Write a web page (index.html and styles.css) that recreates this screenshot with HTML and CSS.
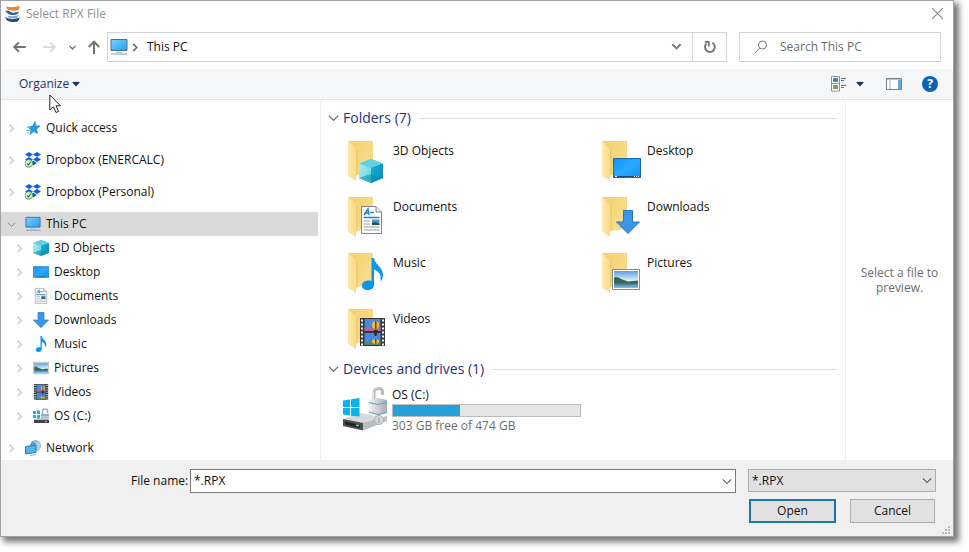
FILE: index.html
```html
<!DOCTYPE html>
<html lang="en">
<head>
<meta charset="utf-8">
<title>Select RPX File</title>
<meta name="viewport" content="width=device-width, initial-scale=1">
<link rel="stylesheet" href="styles.css">
</head>
<body>
<svg class="defs" aria-hidden="true">
  <defs>
    <linearGradient id="g-back" x1="0" y1="0" x2="1" y2="1"><stop offset="0" stop-color="#f3d070"/><stop offset="1" stop-color="#fbdf92"/></linearGradient>
    <linearGradient id="g-flap" x1="0" y1="0" x2="1" y2="0"><stop offset="0" stop-color="#ffe9a8"/><stop offset="1" stop-color="#f8dc8a"/></linearGradient>
    <linearGradient id="g-screen" x1="0" y1="0" x2="1" y2="1"><stop offset="0" stop-color="#7fd0ff"/><stop offset="1" stop-color="#1e9ff2"/></linearGradient>
    <linearGradient id="g-desk" x1="0" y1="0" x2="1" y2="1"><stop offset="0" stop-color="#0d94f5"/><stop offset=".5" stop-color="#2ba9ff"/><stop offset="1" stop-color="#0c93f3"/></linearGradient>
    <linearGradient id="g-left" x1="0" y1="0" x2="1" y2="1"><stop offset="0" stop-color="#b5eff5"/><stop offset="1" stop-color="#58cfdd"/></linearGradient>
    <linearGradient id="g-right" x1="0" y1="0" x2="1" y2="1"><stop offset="0" stop-color="#18b4da"/><stop offset="1" stop-color="#0685b5"/></linearGradient>
    <linearGradient id="g-sky" x1="0" y1="0" x2="0" y2="1"><stop offset="0" stop-color="#5b9fe0"/><stop offset=".6" stop-color="#e8f5fc"/></linearGradient>
    <linearGradient id="g-sea" x1="0" y1="0" x2="0" y2="1"><stop offset="0" stop-color="#2e6c96"/><stop offset="1" stop-color="#8fc0da"/></linearGradient>
    <linearGradient id="g-metal" x1="0" y1="0" x2="1" y2="0"><stop offset="0" stop-color="#f0f2f4"/><stop offset="1" stop-color="#a9adb2"/></linearGradient>
  </defs>
  <symbol id="folder" viewBox="0 0 40 44">
    <path d="M0 0H25V32L8 34Z" fill="url(#g-back)"/>
    <path d="M0 0L8 8V40L0 35Z" fill="url(#g-flap)"/>
    <path d="M8 8V36L10 33V10Z" fill="#ecc45f" opacity=".5"/>
  </symbol>
  <symbol id="pc" viewBox="0 0 18 16">
    <path d="M1 .5H17V11.500H1Z" fill="url(#g-screen)" stroke="#45708e"/>
    <path d="M6 13.500H12" stroke="#a9c9dd"/><path d="M1 15H17" stroke="#7d9db3"/>
  </symbol>
  <symbol id="cube" viewBox="0 0 24 24">
    <path d="M12 0L24 4.500V19L12 24L0 19V4.500Z" fill="#4cc8dc"/>
    <path d="M12 0L24 4.500L12 9L0 4.500Z" fill="#62d0e2"/>
    <path d="M0 4.500L12 9V24L0 19Z" fill="url(#g-left)"/>
    <path d="M12 9L24 4.500V19L12 24Z" fill="url(#g-right)"/>
    <path d="M0 19L12 15L24 19L12 24Z" fill="#0a8fa8" opacity=".6"/>
  </symbol>
  <symbol id="desktop" viewBox="0 0 28 20">
    <path d="M.5 .5H27.500V19.500H.5Z" fill="url(#g-desk)" stroke="#1766a8"/>
    <path d="M1 18.500H27" stroke="#084f8c"/><path d="M2 18.500H4M21 18.500H22M23 18.500H24M25 18.500H26" stroke="#fff"/>
  </symbol>
  <symbol id="doc" viewBox="0 0 21 28">
    <path d="M.5 .5H15L20.500 6V27.500H.5Z" fill="#fff" stroke="#848484"/>
    <path d="M15 .5V6H20.500" fill="#e9e9e9" stroke="#848484"/>
    <path d="M3 9L7 3L8 9M4.500 7H8M9 6.500H13M2.500 11.500H18.500" fill="none" stroke="#2583c5" stroke-width="1.500"/>
    <path d="M2.500 15H9M2.500 18H9M2.500 21H18.500M2.500 24H18.500" stroke="#999"/>
    <path d="M11 13.500H18.500V19H11Z" fill="#4a95ca"/><path d="M11 17Q14 15 18.500 18V19H11Z" fill="#274d55"/>
  </symbol>
  <symbol id="down" viewBox="0 0 24 24">
    <path d="M7.500 .5H16.500V12H23.500L12 23.500L.5 12H7.500Z" fill="#3c96e4" stroke="#2678c0"/>
  </symbol>
  <symbol id="note" viewBox="0 0 21 32">
    <path d="M9.500 0H12C12.500 6 21 9 21 17Q21 21 18.500 23.500Q20 14 12 11.500V27C12 30 9 32 5.500 32C2 32 0 30 0 27.500C0 24 4.500 21.500 9.500 23Z" fill="#0897ee"/>
  </symbol>
  <symbol id="picture" viewBox="0 0 28 21">
    <path d="M.5 .5H27.500V20.500H.5Z" fill="#fff" stroke="#858b90"/>
    <path d="M2 2H26V19H2Z" fill="url(#g-sky)"/>
    <path d="M2 8.500Q5 7 9 10L16 12.500L26 11.500V14.500H2Z" fill="#3c6654"/><path d="M2 14H26V19H2Z" fill="url(#g-sea)"/>
  </symbol>
  <symbol id="film" viewBox="0 0 25 28">
    <path d="M0 0H25V28H0Z" fill="#343434"/>
    <path d="M2 1.500V28M23 1.500V28" stroke="#fff" stroke-width="2" stroke-dasharray="2 2"/>
    <path d="M4.500 1H20.500V13H4.500ZM4.500 15H20.500V27H4.500Z" fill="#4b86de"/>
    <path d="M4.500 10Q8 8 12 11L20.500 9V13H4.500Z" fill="#c06090"/><path d="M4.500 24L12 25L20.500 23V27H4.500Z" fill="#538b4d"/>
    <ellipse cx="15.500" cy="7" rx="3.500" ry="4" fill="#eebf27"/><path d="M15 3H16.500V11H15Z" fill="#7c2a2a"/><path d="M14 12H17.500L16.500 18H14.500Z" fill="#282828"/>
    <ellipse cx="15.500" cy="23.500" rx="3.500" ry="2.500" fill="#eebf27"/><path d="M15 21H16.500V26H15Z" fill="#a22e2a"/>
  </symbol>
  <symbol id="star" viewBox="0 0 16 16">
    <path d="M10 1.500L10.700 5.800L15 6L11.500 9L12.500 13.500L8.800 11.500L5 14.500L6 10L3 7L7.500 6.200Z" fill="#259be8" stroke="#147fc5" stroke-width=".6"/>
    <path d="M2 7.500H5M1 10.500H5M2 13H4" stroke="#65b9ec"/>
  </symbol>
  <symbol id="dropbox" viewBox="0 0 16 16">
    <path d="M4 0L8 2.500L4 5L0 2.500ZM12 0L16 2.500L12 5L8 2.500ZM4 5L8 7.500L4 10L0 7.500ZM12 5L16 7.500L12 10L8 7.500ZM8 8.500L12 11L8 13.500L5 11Z" fill="#0f5ee8"/>
    <circle cx="3.800" cy="11.500" r="3.800" fill="#f4fff4" stroke="#4b9f56"/><path d="M1.800 11.500L3.300 13L6 9.800" fill="none" stroke="#318a3e" stroke-width="1.200"/>
  </symbol>
  <symbol id="drive-s" viewBox="0 0 16 16">
    <path d="M0 3H3V6H0ZM4 2.500H7V6H4ZM0 7H3V10H0ZM4 7H7V10.500H4Z" fill="#16b3df"/>
    <path d="M9.500 7V3Q9.500 1 12 1T14.500 3V5" fill="none" stroke="#a3abb0" stroke-width="1.500"/><path d="M8 6H16V11H8Z" fill="#bac5cb"/><path d="M8 7H16" stroke="#7098a8"/>
    <path d="M2 10.500H14L16 12H1Z" fill="#b8bcbe"/><path d="M1 12H16V15H1Z" fill="#3e4446"/><path d="M12 13.500H14" stroke="#5ed36c"/>
  </symbol>
  <symbol id="network" viewBox="0 0 16 16">
    <circle cx="10.500" cy="5.500" r="5.300" fill="#5b9dc0"/><path d="M8 1Q12 3 10 6T14 10Q17 6 14 2Z" fill="#a8d3df"/>
    <path d="M.5 6.500L11 5V12.500L.5 14Z" fill="#4fb4f2" stroke="#347ca9"/><path d="M5 15.500L11 14.500" stroke="#8faebd"/>
  </symbol>
  <symbol id="drive" viewBox="0 0 44 44">
    <path d="M0 32L17 26L44 31L20 43L0 39Z" fill="#d6d8da"/><path d="M0 32L20 36V43.500L0 39Z" fill="#4b4f50"/><path d="M2 34.500L17 38V41L2 37.500Z" fill="#222"/><path d="M13 38L16 38.700" stroke="#4be26a" stroke-width="1.500"/>
    <path d="M20 36L44 29V34L20 43.500Z" fill="#b9bcc0"/>
    <path d="M0 13.500L7 12.500V20H0ZM8 12.300L16.500 11V20H8ZM0 21H7V28.500L0 27.500ZM8 21H16.500V29.500L8 28.700Z" fill="#08b5ea"/>
    <path d="M31 13V6Q31 1.500 35.500 1.500T39.500 6V8" fill="none" stroke="#b6babe" stroke-width="3"/><path d="M30.500 12V6Q31 1 35.500 1" fill="none" stroke="#e3e6e8"/>
    <path d="M26 13L35 11L44 13V26L35 29L26 26Z" fill="url(#g-metal)"/><path d="M26 15.500L35 17.500L44 15.500M26 25L35 27.500L44 25" fill="none" stroke="#65a6c0"/>
    <circle cx="36" cy="33" r="4.500" fill="#d4d8db" stroke="#adb2b6"/><path d="M36 31V36" stroke="#8d9296"/>
  </symbol>
  <symbol id="right" viewBox="0 0 8 10"><path d="M2 1L6 5L2 9" fill="none" stroke="currentColor" stroke-width="1.700"/></symbol>
  <symbol id="chev" viewBox="0 0 12 8"><path d="M1 1.500L6 6.500L11 1.500" fill="none" stroke="currentColor" stroke-width="1.300"/></symbol>
  <symbol id="caret" viewBox="0 0 8 5"><path d="M0 0H8L4 4.500Z" fill="currentColor"/></symbol>
</svg>

<main class="dialog">
  <header class="titlebar">
    <svg class="logo" viewBox="0 0 16 16" aria-hidden="true"><path d="M1 .5Q7 2 15 0L13.500 4Q7 5.500 2.500 3.500Z" fill="#ef8127"/><path d="M0 4.500Q4 4.500 7 6.500Q10 7 14.500 5.500Q12 9.500 7.500 9Q3 9 0 4.500Z" fill="#2d609c"/><path d="M2.500 9.500Q8 11 13.500 9L12 12Q7 12.500 3.500 11.500Z" fill="#7fa9cc"/><path d="M0 11Q7 14.500 15 11.500L13 15.500Q6 17 2 14.500Z" fill="#254e87"/></svg>
    <h1>Select RPX File</h1>
    <button class="plain close" aria-label="Close"><svg viewBox="0 0 10 10"><path d="M0 0L10 10M10 0L0 10" stroke="#8a8a8a"/></svg></button>
  </header>

  <nav class="navbar" aria-label="Location">
    <div class="arrows">
      <button class="plain" aria-label="Back"><svg class="arrow" viewBox="0 0 12 12"><path d="M11 6H1M5 2L1 6L5 10" fill="none" stroke="#737373" stroke-width="1.700"/></svg></button>
      <button class="plain" aria-label="Forward"><svg class="arrow" viewBox="0 0 12 12"><path d="M1 6H11M7 2L11 6L7 10" fill="none" stroke="#d8d8d8" stroke-width="1.500"/></svg></button>
      <button class="plain recent" aria-label="Recent locations"><svg viewBox="0 0 12 8"><path d="M1 1.500L6 6.500L11 1.500" fill="none" stroke="#777" stroke-width="2.500"/></svg></button>
      <button class="plain" aria-label="Up"><svg class="arrow" viewBox="0 0 12 12"><path d="M6 12V1.500M1.500 6L6 1.500L10.500 6" fill="none" stroke="#737373" stroke-width="1.700"/></svg></button>
    </div>
    <div class="address">
      <svg class="pc"><use href="#pc"/></svg>
      <svg class="crumb"><use href="#right"/></svg>
      <a href="#this-pc">This PC</a>
      <button class="plain drop" aria-label="Previous locations"><svg viewBox="0 0 12 8"><path d="M1.500 1L6 5.500L10.500 1" fill="none" stroke="#777" stroke-width="2.200"/></svg></button>
      <button class="plain refresh" aria-label="Refresh"><svg viewBox="0 0 12 12"><path d="M3 3A4.200 4.200 0 1 0 8 2.400" fill="none" stroke="#737373" stroke-width="1.600"/><path d="M1.500 1.500H5V5.500" fill="none" stroke="#737373" stroke-width="1.500"/></svg></button>
    </div>
    <label class="search">
      <svg viewBox="0 0 14 14" aria-hidden="true"><circle cx="8.500" cy="5" r="4" fill="none" stroke="#777"/><path d="M5.700 8L1 13" stroke="#777"/></svg>
      <input type="search" placeholder="Search This PC" aria-label="Search This PC">
    </label>
  </nav>

  <div class="toolbar">
    <div class="organize"><button class="plain">Organize <svg class="caret"><use href="#caret"/></svg></button>
      <svg class="pointer" viewBox="0 0 13 20" aria-hidden="true"><path d="M.8 1V16L4.300 12.700L7 18.500L9.500 17.400L7 11.800H11.500Z" fill="#fff" stroke="#222"/></svg>
    </div>
    <div class="tools">
      <button class="plain view" aria-label="Change view">
        <svg class="views" viewBox="0 0 16 16"><path d="M.5 .5H8.500V7.500H.5ZM.5 7.500H8.500V15H.5Z" fill="#fff" stroke="#87919a"/><path d="M2 2H7V6H2Z" fill="#4b89b4"/><path d="M2 9H7V13H2Z" fill="#8c9b55"/><path d="M10 2.500H15M10 4.500H13M10 9.500H15M10 11.500H13" stroke="#62707e"/></svg>
        <svg class="caret"><use href="#caret"/></svg>
      </button>
      <button class="plain" aria-label="Preview pane"><svg class="pane" viewBox="0 0 16 12"><path d="M.5 .5H15.500V11.500H.5Z" fill="#fff" stroke="#77828c"/><path d="M.5 1H15.500" stroke="#77828c"/><path d="M4 2V11" stroke="#aaa"/><path d="M12 2H15V11H12Z" fill="#66aad2"/></svg></button>
      <button class="help" aria-label="Help">?</button>
    </div>
  </div>

  <div class="content">
    <nav class="tree" aria-label="Folders">
      <ul>
        <li><a href="#quick"><svg class="exp"><use href="#right"/></svg><svg class="ico"><use href="#star"/></svg>Quick access</a></li>
        <li><a href="#enercalc"><svg class="exp"><use href="#right"/></svg><svg class="ico"><use href="#dropbox"/></svg>Dropbox (ENERCALC)</a></li>
        <li><a href="#personal"><svg class="exp"><use href="#right"/></svg><svg class="ico"><use href="#dropbox"/></svg>Dropbox (Personal)</a></li>
        <li><a class="selected" id="this-pc" href="#this-pc"><svg class="exp open"><use href="#chev"/></svg><svg class="ico"><use href="#pc"/></svg>This PC</a>
          <ul>
            <li><a href="#f1"><svg class="exp"><use href="#right"/></svg><svg class="ico"><use href="#cube"/></svg>3D Objects</a></li>
            <li><a href="#f2"><svg class="exp"><use href="#right"/></svg><svg class="ico"><use href="#desktop"/></svg>Desktop</a></li>
            <li><a href="#f3"><svg class="exp"><use href="#right"/></svg><svg class="ico"><use href="#doc"/></svg>Documents</a></li>
            <li><a href="#f4"><svg class="exp"><use href="#right"/></svg><svg class="ico"><use href="#down"/></svg>Downloads</a></li>
            <li><a href="#f5"><svg class="exp"><use href="#right"/></svg><svg class="ico"><use href="#note"/></svg>Music</a></li>
            <li><a href="#f6"><svg class="exp"><use href="#right"/></svg><svg class="ico"><use href="#picture"/></svg>Pictures</a></li>
            <li><a href="#f7"><svg class="exp"><use href="#right"/></svg><svg class="ico"><use href="#film"/></svg>Videos</a></li>
            <li><a href="#c"><svg class="exp"><use href="#right"/></svg><svg class="ico"><use href="#drive-s"/></svg>OS (C:)</a></li>
          </ul>
        </li>
        <li><a href="#network"><svg class="exp"><use href="#right"/></svg><svg class="ico"><use href="#network"/></svg>Network</a></li>
      </ul>
    </nav>

    <div class="items">
      <section>
        <h2><svg><use href="#chev"/></svg>Folders (7)</h2>
        <div class="tiles">
          <a id="f1" href="#f1"><svg class="big" viewBox="0 0 40 44"><use href="#folder" width="40" height="44"/><use href="#cube" x="11" y="18" width="24" height="24"/></svg>3D Objects</a>
          <a id="f2" href="#f2"><svg class="big" viewBox="0 0 40 44"><use href="#folder" width="40" height="44"/><use href="#desktop" x="11" y="17" width="28" height="20"/></svg>Desktop</a>
          <a id="f3" href="#f3"><svg class="big" viewBox="0 0 40 44"><use href="#folder" width="40" height="44"/><use href="#doc" x="13" y="9" width="21" height="28"/></svg>Documents</a>
          <a id="f4" href="#f4"><svg class="big" viewBox="0 0 40 44"><use href="#folder" width="40" height="44"/><use href="#down" x="14" y="13" width="24" height="24"/></svg>Downloads</a>
          <a id="f5" href="#f5"><svg class="big" viewBox="0 0 40 44"><use href="#folder" width="40" height="44"/><use href="#note" x="14" y="5" width="21" height="32"/></svg>Music</a>
          <a id="f6" href="#f6"><svg class="big" viewBox="0 0 40 44"><use href="#folder" width="40" height="44"/><use href="#picture" x="10" y="16" width="28" height="21"/></svg>Pictures</a>
          <a id="f7" href="#f7"><svg class="big" viewBox="0 0 40 44"><use href="#folder" width="40" height="44"/><use href="#film" x="12" y="9" width="25" height="28"/></svg>Videos</a>
        </div>
      </section>
      <section>
        <h2><svg><use href="#chev"/></svg>Devices and drives (1)</h2>
        <a class="drive" id="c" href="#c">
          <svg><use href="#drive"/></svg>
          <span class="usage"><span>OS (C:)</span><span class="bar"><span class="used" style="width:36%"></span></span><span class="free">303 GB free of 474 GB</span></span>
        </a>
      </section>
    </div>

    <aside class="preview">Select a file to preview.</aside>
  </div>

  <footer class="footer">
    <label for="file">File name:</label>
    <div class="combo"><input id="file" type="text" value="*.RPX"><button class="plain" aria-label="Show recent files"><svg class="chev"><use href="#chev"/></svg></button></div>
    <div class="choices">
      <div class="filter"><select aria-label="File type"><option>*.RPX</option></select><svg class="chev"><use href="#chev"/></svg></div>
      <div class="actions"><button class="button primary">Open</button><button class="button">Cancel</button></div>
    </div>
    <svg class="grip" viewBox="0 0 8 8" aria-hidden="true"><path d="M6 0H8V2H6ZM3 3H5V5H3ZM6 3H8V5H6ZM0 6H2V8H0ZM3 6H5V8H3ZM6 6H8V8H6Z" fill="#bbb"/></svg>
  </footer>
</main>
</body>
</html>
```
FILE: styles.css
```css
* { box-sizing: border-box; }
body { margin: 0; min-height: 100vh; display: flex; background: #fff; color: #111; font: 12px/16px "Open Sans", "Noto Sans", sans-serif; }
a { color: inherit; text-decoration: none; }
svg { display: block; flex: none; }
button, input, select { font: inherit; color: inherit; }
.defs { position: absolute; width: 0; height: 0; }
.plain { border: 0; padding: 0; background: none; display: flex; align-items: center; justify-content: center; }
h1, h2 { margin: 0; font-weight: 400; }

.dialog { flex: 1; min-width: 0; margin: 0 15px 15px 0; display: flex; flex-direction: column; background: #fff; border: 1px solid #a2a2a2; box-shadow: 4px 4px 6px 1px #777; }

.titlebar { display: flex; align-items: center; gap: 5px; height: 25px; padding: 0 10px 0 4px; }
.titlebar h1 { flex: 1; font-size: 12px; color: #8f8f8f; }
.logo { width: 16px; height: 16px; }
.close svg { width: 11px; height: 11px; }

.navbar { display: flex; gap: 12px; padding: 6px 12px 7px 12px; }
.arrows { display: flex; align-items: center; gap: 15px; width: 94px; margin-right: -12px; }
.arrow { width: 14px; height: 14px; }
.recent { margin: 0 -4px 0 -2px; }
.recent svg { width: 7px; height: 5px; }
.address { flex: 1; display: flex; align-items: stretch; height: 30px; border: 1px solid #d4d4d4; }
.address > svg, .address > a { align-self: center; }
.address a { flex: 1; }
.pc { width: 18px; height: 16px; margin-left: 2px; }
.crumb { width: 8px; height: 9px; margin: 0 8px 0 3px; color: #666; }
.drop { width: 31px; }
.drop svg { width: 11px; height: 8px; }
.refresh { width: 34px; border-left: 1px solid #d4d4d4; }
.refresh svg { width: 14px; height: 14px; }
.search { width: 202px; height: 30px; display: flex; align-items: center; gap: 12px; padding: 0 14px; border: 1px solid #d4d4d4; }
.search svg { width: 14px; height: 14px; }
.search input { flex: 1; min-width: 0; padding: 0; border: 0; background: none; }
.search input::placeholder { color: #6d6d6d; opacity: 1; }

.toolbar { display: flex; justify-content: space-between; align-items: center; height: 31px; padding: 0 15px 0 18px; background: #f4f6f8; border-bottom: 1px solid #e3e6e9; color: #1d3168; }
.organize { position: relative; }
.organize button { gap: 3px; }
.pointer { position: absolute; left: 30px; top: 18px; width: 13px; height: 20px; z-index: 1; }
.caret { width: 8px; height: 5px; }
.tools { display: flex; align-items: center; gap: 20px; }
.view { gap: 9px; margin-right: 2px; }
.views { width: 16px; height: 16px; }
.pane { width: 16px; height: 12px; }
.help { width: 16px; height: 16px; padding: 0; border: 0; border-radius: 50%; background: #0864ba; color: #fff; font-weight: 700; line-height: 16px; }

.content { flex: 1; display: flex; }
.tree { width: 320px; padding: 16px 2px 0 0; border-right: 1px solid #f0f0f0; }
.tree ul { list-style: none; margin: 0; padding: 0; }
.tree > ul { display: grid; gap: 8px; }
.tree a { display: flex; align-items: center; height: 24px; padding-left: 6px; }
.tree li li a { padding-left: 14px; }
.tree .selected { background: #d9d9d9; }
.exp { width: 9px; height: 9px; margin-right: 9px; color: #d0d0d0; }
.exp.open { height: 7px; color: #8a8a8a; }
.ico { width: 16px; height: 16px; margin-right: 5px; }

.items { flex: 1; padding: 8px 8px 0 7px; }
.items h2 { display: flex; align-items: center; height: 20px; font-size: 14px; line-height: 20px; color: #1f3283; }
.items h2 svg { width: 11px; height: 8px; margin-right: 4px; color: #777; }
.items h2::after { content: ""; flex: 1; height: 1px; margin-left: 8px; background: #e0e0e0; }
.tiles { display: grid; grid-template-columns: repeat(auto-fill, 254px); padding: 13px 0 0 20px; margin-right: -20px; }
.tiles a { display: flex; gap: 5px; height: 56px; line-height: 20px; }
.big { width: 40px; height: 44px; }
.items section + section { margin-top: -6px; }
.drive { display: flex; gap: 5px; padding: 8px 0 0 15px; }
.drive > svg { width: 44px; height: 44px; }
.usage { display: flex; flex-direction: column; width: 189px; }
.bar { height: 13px; margin: 1px 0; border: 1px solid #bcbcbc; background: #e6e6e6; }
.used { display: block; height: 100%; background: #26a0da; }
.free { color: #6d6d6d; }

.preview { width: 108px; display: flex; align-items: center; padding: 0 12px; border-left: 1px solid #f0f0f0; color: #6d6d6d; line-height: 15px; text-align: center; }

.footer { position: relative; display: flex; padding: 9px 17px 13px 130px; background: #f0f0f0; }
.footer label { width: 59px; line-height: 24px; }
.combo { flex: 1; display: flex; height: 24px; border: 1px solid #7a7a7a; background: #fff; }
.combo input { flex: 1; min-width: 0; padding: 0 3px; border: 0; background: none; outline: 0; }
.combo button { width: 17px; }
.chev { width: 10px; height: 7px; color: #555; }
.choices { width: 188px; margin-left: 12px; display: grid; gap: 7px; }
.filter { position: relative; }
.filter select { display: block; appearance: none; width: 100%; height: 23px; padding: 0 3px; border: 1px solid #adadad; border-radius: 0; background: #e1e1e1; }
.filter svg { position: absolute; right: 4px; top: 8px; pointer-events: none; }
.actions { display: flex; gap: 14px; padding: 0 1px; }
.button { flex: 1 1 0; height: 24px; padding: 0; border: 1px solid #adadad; background: #e1e1e1; }
.primary { border: 2px solid #1d73b4; }
.grip { position: absolute; right: 3px; bottom: 2px; width: 8px; height: 8px; }
```
